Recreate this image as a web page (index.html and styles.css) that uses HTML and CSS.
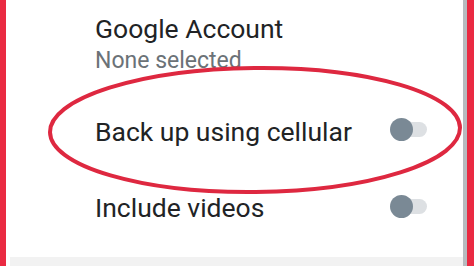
FILE: index.html
```html
<!DOCTYPE html>
<html>
<head>
<meta charset="utf-8">
<link rel="stylesheet" href="styles.css">
</head>
<body>
<div class="page">
  <div class="edge-left"></div>
  <div class="content">
    <div class="account">
      <div class="title">Google Account</div>
      <div class="subtitle">None selected</div>
    </div>
    <div class="row row-cellular">
      <div class="title">Back up using cellular</div>
      <div class="toggle toggle-up"><span class="track"></span><span class="knob"></span></div>
    </div>
    <div class="row row-videos">
      <div class="title">Include videos</div>
      <div class="toggle"><span class="track"></span><span class="knob"></span></div>
    </div>
    <div class="spacer"></div>
    <div class="footer-strip"></div>
  </div>
  <div class="scroll-line"></div>
  <div class="edge-right"></div>
  <svg class="annotation" width="474" height="266" viewBox="0 0 474 266">
    <ellipse cx="255" cy="130" rx="205" ry="62" fill="none" stroke="#de2840" stroke-width="4" transform="rotate(-0.6 255 130)"/>
  </svg>
</div>
</body>
</html>
```
FILE: styles.css
```css
html, body {
  margin: 0;
  padding: 0;
  background: #ffffff;
}
.page {
  position: relative;
  width: 474px;
  height: 266px;
  display: flex;
  overflow: hidden;
  font-family: Roboto, "Noto Sans", sans-serif;
}
.edge-left {
  width: 6px;
  background: #ea2a42;
}
.edge-right {
  width: 7px;
  background: #ea2a42;
}
.scroll-line {
  width: 4px;
  background: #b7bbbf;
}
.content {
  flex: 1;
  display: flex;
  flex-direction: column;
  padding-top: 13px;
  background: #ffffff;
}
.account {
  padding-left: 89px;
}
.title {
  font-size: 26.5px;
  line-height: 31px;
  color: #212325;
}
.subtitle {
  margin-top: 3px;
  font-size: 23px;
  line-height: 27px;
  color: #6b7277;
}
.row {
  display: flex;
  align-items: center;
  justify-content: space-between;
  padding-left: 89px;
  padding-right: 36px;
  height: 31px;
}
.row-cellular {
  margin-top: 42px;
}
.row-videos {
  margin-top: 45px;
}
.toggle {
  position: relative;
  width: 37px;
  height: 23px;
  margin-bottom: 2px;
}
.toggle-up {
  margin-bottom: 4px;
}
.track {
  position: absolute;
  left: 8px;
  right: 0;
  top: 4px;
  height: 15px;
  border-radius: 8px;
  background: #dde0e3;
}
.knob {
  position: absolute;
  left: 0;
  top: 0;
  width: 23px;
  height: 23px;
  border-radius: 50%;
  background: #7a8995;
}
.spacer {
  flex: 1;
}
.footer-strip {
  height: 9px;
  margin-left: 4px;
  background: #f2f2f2;
}
.annotation {
  position: absolute;
  left: 0;
  top: 0;
  pointer-events: none;
}
```
